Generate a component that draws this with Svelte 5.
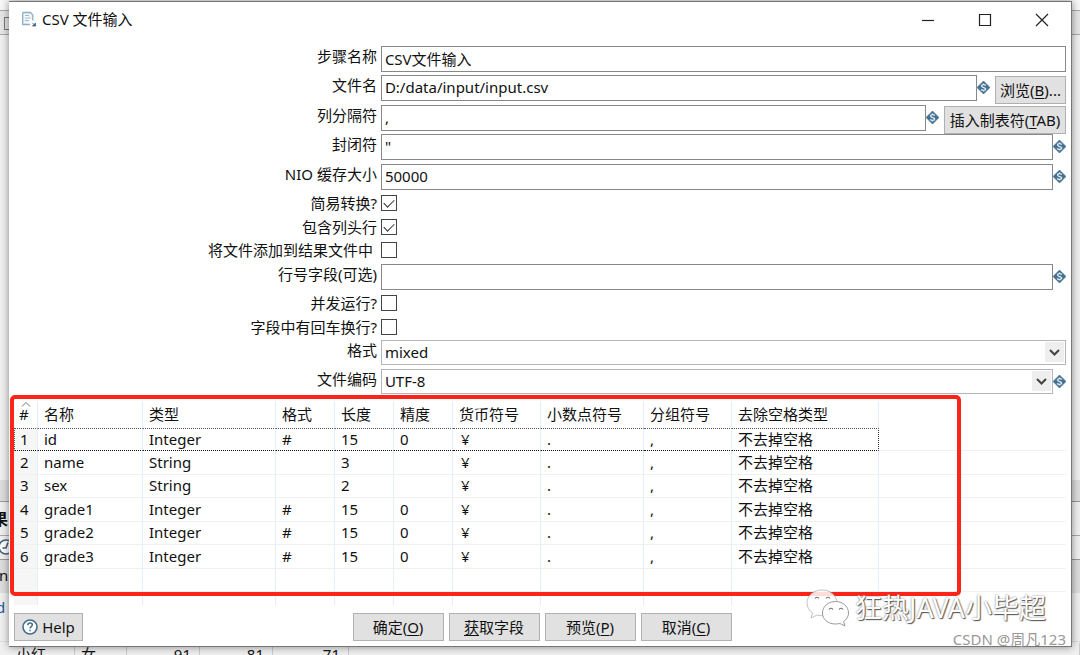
<script lang="ts">
	interface Field {
		name: string;
		type: string;
		format: string;
		length: string;
		precision: string;
	}

	let stepName = $state('CSV文件输入');
	let filename = $state('D:/data/input/input.csv');
	let delimiter = $state(',');
	let enclosure = $state('"');
	let bufferSize = $state('50000');
	let lazy = $state(true);
	let header = $state(true);
	let addResult = $state(false);
	let rowNumField = $state('');
	let parallel = $state(false);
	let newlines = $state(false);
	let format = $state('mixed');
	let encoding = $state('UTF-8');

	const columns = ['名称', '类型', '格式', '长度', '精度', '货币符号', '小数点符号', '分组符号', '去除空格类型'];

	const fields: Field[] = [
		{ name: 'id', type: 'Integer', format: '#', length: '15', precision: '0' },
		{ name: 'name', type: 'String', format: '', length: '3', precision: '' },
		{ name: 'sex', type: 'String', format: '', length: '2', precision: '' },
		{ name: 'grade1', type: 'Integer', format: '#', length: '15', precision: '0' },
		{ name: 'grade2', type: 'Integer', format: '#', length: '15', precision: '0' },
		{ name: 'grade3', type: 'Integer', format: '#', length: '15', precision: '0' }
	];
</script>

{#snippet variable()}
	<svg class="variable" viewBox="0 0 12 12" aria-hidden="true">
		<path d="M6 0 12 6 6 12 0 6Z" fill="#42708f" stroke="#42708f" stroke-width=".6" stroke-linejoin="round" />
		<path d="M8 4.300C7.400 3.100 4.200 3 4.200 4.700S8 5.800 8 7.400 4.500 8.900 3.900 7.700M6 2.200v1.200M6 8.600v1.200" fill="none" stroke="#e6eef4" stroke-width="1.200" />
	</svg>
{/snippet}

<div class="desktop">
	<div class="backdrop" aria-hidden="true">
		<div class="bar tabs"></div>
		<div class="bar tools"><i></i></div>
		<div class="bar canvas"></div>
		<div class="bar sash"></div>
		<div class="bar results">果</div>
		<div class="bar clock">
			<svg viewBox="0 0 16 16"><circle cx="8" cy="8" r="7" fill="#fff" stroke="#42617a" stroke-width="1.6" /><path d="M10 3.5 8 9H4.5" fill="none" stroke="#42617a" stroke-width="1.6" /></svg>
		</div>
		<div class="bar head">ns</div>
		<div class="bar body">d</div>
		<div class="bar record">
			<span>小红</span><span>女</span><span class="num">91</span><span class="num">81</span><span class="num">71</span><span></span>
		</div>
	</div>

	<main class="dialog">
		<header>
			<svg class="logo" viewBox="0 0 16 16" aria-hidden="true">
				<path d="M1.7 1.5h7.8l2.3 2.4v5.6M9 13.5H1.7v-12" fill="#eef5fa" stroke="#8fadc2" stroke-width="1.3" />
				<path d="M4 4.5h4M4 7h5.5M4 9.5h4" stroke="#9bb9cd" stroke-width="1.2" />
				<path d="m11.500 12 1.500 1.500m1.500-1.500v3h-3Z" fill="#38637f" stroke="#38637f" stroke-width=".8" />
			</svg>
			<h1>CSV 文件输入</h1>
			<button class="win" aria-label="Minimize"><svg viewBox="0 0 14 14"><path d="M1 7.5h12" /></svg></button>
			<button class="win" aria-label="Maximize"><svg viewBox="0 0 14 14"><path d="M1.5 1.5h11v11h-11z" /></svg></button>
			<button class="win" aria-label="Close"><svg viewBox="0 0 14 14"><path d="m1 1 12 12M13 1 1 13" /></svg></button>
		</header>

		<form onsubmit={(e) => e.preventDefault()}>
			<label for="step">步骤名称</label>
			<div class="control"><input id="step" type="text" bind:value={stepName} /></div>

			<label for="file">文件名</label>
			<div class="control">
				<input id="file" type="text" bind:value={filename} />
				{@render variable()}
				<button type="button" class="btn side browse">浏览(<u>B</u>)...</button>
			</div>

			<label for="delimiter">列分隔符</label>
			<div class="control">
				<input id="delimiter" type="text" bind:value={delimiter} />
				{@render variable()}
				<button type="button" class="btn side tab">插入制表符(<u>T</u>AB)</button>
			</div>

			<label for="enclosure">封闭符</label>
			<div class="control"><input id="enclosure" type="text" bind:value={enclosure} />{@render variable()}</div>

			<label for="buffer">NIO 缓存大小</label>
			<div class="control"><input id="buffer" type="text" bind:value={bufferSize} />{@render variable()}</div>

			<label class="short" for="lazy">简易转换?</label>
			<input id="lazy" type="checkbox" bind:checked={lazy} />

			<label class="short" for="header">包含列头行</label>
			<input id="header" type="checkbox" bind:checked={header} />

			<label class="short" for="add">将文件添加到结果文件中&nbsp;</label>
			<input id="add" type="checkbox" bind:checked={addResult} />

			<label for="rownum">行号字段(可选)</label>
			<div class="control"><input id="rownum" type="text" bind:value={rowNumField} />{@render variable()}</div>

			<label class="short" for="parallel">并发运行?</label>
			<input id="parallel" type="checkbox" bind:checked={parallel} />

			<label class="short" for="newlines">字段中有回车换行?</label>
			<input id="newlines" type="checkbox" bind:checked={newlines} />

			<label for="format">格式</label>
			<div class="control">
				<div class="combo">
					<select id="format" bind:value={format}><option>mixed</option><option>DOS</option><option>Unix</option></select>
					<svg viewBox="0 0 19 20" aria-hidden="true"><path d="m5 8 4.5 4.5L14 8" /></svg>
				</div>
			</div>

			<label for="encoding">文件编码</label>
			<div class="control">
				<div class="combo">
					<select id="encoding" bind:value={encoding}><option>UTF-8</option><option>GBK</option></select>
					<svg viewBox="0 0 19 20" aria-hidden="true"><path d="m5 8 4.5 4.5L14 8" /></svg>
				</div>
				{@render variable()}
			</div>
		</form>

		<section class="fields">
			<table>
				<colgroup>
					<col class="w-index" /><col class="w-name" /><col class="w-type" /><col class="w-small" /><col class="w-small" /><col class="w-small" />
					<col class="w-mid" /><col class="w-decimal" /><col class="w-mid" /><col class="w-trim" /><col />
				</colgroup>
				<thead>
					<tr>
						<th class="index">
							<svg viewBox="0 0 10 5" aria-hidden="true"><path d="m1 4.5 4-4 4 4" fill="none" stroke="#777" /></svg>#
						</th>
						{#each columns as column}
							<th>{column}</th>
						{/each}
						<th></th>
					</tr>
				</thead>
				<tbody>
					{#each fields as field, i (field.name)}
						<tr class:focused={i === 0}>
							<td class="index">{i + 1}</td>
							<td>{field.name}</td>
							<td>{field.type}</td>
							<td>{field.format}</td>
							<td>{field.length}</td>
							<td>{field.precision}</td>
							<td class="currency">¥</td>
							<td>.</td>
							<td>,</td>
							<td>不去掉空格</td>
							<td></td>
						</tr>
					{/each}
					{#each ['blank', 'rest'] as kind}
						<tr class={kind}>
							<td class="index"></td>
							{#each columns as _}<td></td>{/each}
							<td></td>
						</tr>
					{/each}
				</tbody>
			</table>
			<div class="highlight"></div>
		</section>

		<footer>
			<button class="btn help">
				<svg viewBox="0 0 16 16" aria-hidden="true">
					<circle cx="8" cy="8" r="7" fill="#fff" stroke="#426c8b" stroke-width="1.6" />
					<path d="M5.8 6.3c0-3 4.5-2.8 4.5-.2C10.300 7.700 8 7.700 8 9.600M8 10.800v1.500" fill="none" stroke="#426c8b" stroke-width="1.500" />
				</svg>Help
			</button>
			<div class="actions">
				<button class="btn">确定(<u>O</u>)</button>
				<button class="btn"><u>获</u>取字段</button>
				<button class="btn">预览(<u>P</u>)</button>
				<button class="btn">取消(<u>C</u>)</button>
			</div>
		</footer>
	</main>

	<div class="watermark">
		<svg viewBox="0 0 44 38" aria-hidden="true">
			<g stroke="#999" stroke-width="1">
				<path d="M16 1C7.500 1 1 6.700 1 14c0 4.200 2.200 7.700 5.600 10L5 29l6-3c1.600.5 3.300.7 5 .7 8.500 0 15-5.500 15-12.700S24.500 1 16 1Z" fill="#fff" fill-opacity=".85" stroke-opacity=".6" />
				<path d="M29.500 12.500C22 12.500 16.500 17.500 16.500 24S22 35 29.500 35c1.500 0 3-.2 4.300-.6l5.200 2.600-1.400-4.400c3-2 4.900-5.100 4.900-8.600 0-6.500-5.500-11.500-13-11.500Z" fill="#fff" />
			</g>
			<path d="M9 9.500q2-2.500 4 0M20 9.500q2-2.500 4 0M23 20.500q2-2.500 4 0M33 20.500q2-2.500 4 0" fill="none" stroke="#777" stroke-width="1.200" />
		</svg>
		<span>狂热JAVA小毕超</span>
	</div>
	<div class="credit">CSDN @周凡123</div>
</div>

<style>
	:global(body) {
		background: #f0f0f0;
	}

	.desktop {
		position: relative;
		overflow: hidden;
		padding: 1px 8px 9px 9px;
		font-family: 'Noto Sans', 'Noto Sans CJK SC', sans-serif;
		font-size: 15px;
		line-height: 22px;
		color: #111;
	}

	.desktop *, .desktop {
		box-sizing: border-box;
	}

	.backdrop {
		position: absolute;
		inset: 0;
		display: flex;
		flex-direction: column;
		background: #f0f0f0;
	}
	.bar {
		flex: none;
		overflow: hidden;
		white-space: nowrap;
	}
	.tabs { height: 11px; background: #f8f8f8; border-bottom: 1px solid #aaa; }
	.tools { height: 24px; padding-top: 6px; background: #e6e6e6; border-bottom: 1px solid #aaa; }
	.tools i { display: block; width: 12px; height: 13px; margin-left: 4px; border: 1px solid #777; }
	.canvas { height: 445px; }
	.sash { height: 22px; background: #ddd; border-bottom: 1px solid #999; }
	.results { height: 34px; line-height: 34px; font-size: 16px; font-weight: 700; text-indent: -8px; border-bottom: 1px solid #aaa; }
	.clock { height: 24px; padding-top: 3px; border-bottom: 1px solid #999; }
	.clock svg { display: block; width: 16px; margin-left: -2px; }
	.head { height: 33px; line-height: 30px; text-indent: -1px; background: #ddd; }
	.body { height: 49px; line-height: 28px; color: #145a9c; text-indent: -4px; border-bottom: 1px solid #ddd; }
	.record { display: grid; grid-template-columns: 75px 52px 73px 73px 76px 1fr; flex: 1; padding-top: 1px; }
	.record span { padding-left: 6px; border-right: 1px solid #ccc; }
	.record span:first-child { padding-left: 16px; }
	.record .num { padding: 0 8px 0 0; text-align: right; }

	.dialog {
		position: relative;
		background: #fff;
		border: 1px solid #777;
		border-width: 1px 1px 1px 0;
		box-shadow: 0 0 8px rgba(0, 0, 0, 0.45);
	}

	header {
		display: flex;
		align-items: center;
		height: 34px;
		padding: 0 1px 0 12px;
	}
	.logo { width: 16px; height: 16px; }
	h1 {
		flex: 1;
		margin: 0 0 0 5px;
		font-size: 15px;
		font-weight: 400;
	}
	.win {
		width: 57px;
		height: 34px;
		padding: 0;
		border: 0;
		background: none;
	}
	.win svg { width: 14px; height: 14px; vertical-align: middle; }
	.win path { fill: none; stroke: #222; stroke-width: 1.2; }

	form {
		display: grid;
		grid-template-columns: 35% 1fr;
		grid-template-rows: 29px 30px 29px 30px 31px 24px 23px 22px 31px 24px 21px 29px 26px;
		padding: 10px 5px 0 3px;
		margin: 0;
	}
	label {
		padding-right: 4px;
		text-align: right;
		line-height: 20px;
	}
	label.short { line-height: 16px; }

	.control {
		display: flex;
		align-items: flex-start;
	}
	input[type='text'] {
		flex: 1;
		min-width: 0;
		height: 26px;
		padding: 0 3px 2px;
		border: 1px solid #888;
		border-radius: 0;
		background: #fff;
		font: inherit;
		color: inherit;
	}
	.variable {
		flex: none;
		width: 13px;
		height: 13px;
		margin-top: 6px;
	}

	input[type='checkbox'] {
		appearance: none;
		width: 16px;
		height: 16px;
		margin: 0;
		border: 1px solid #444;
		background: #fff;
	}
	input[type='checkbox']:checked::after {
		content: '';
		display: block;
		width: 9px;
		height: 5px;
		margin: 3px 2px;
		border: solid #333;
		border-width: 0 0 1px 1px;
		transform: rotate(-45deg);
	}

	.combo {
		position: relative;
		flex: 1;
	}
	.combo select {
		display: block;
		appearance: none;
		width: 100%;
		height: 25px;
		padding: 0 3px 2px;
		border: 1px solid #b4b4ba;
		border-radius: 0;
		background: #fff;
		font: inherit;
		color: inherit;
	}
	.combo svg {
		position: absolute;
		top: 2px;
		right: 2px;
		width: 19px;
		height: 20px;
		background: #eee;
		pointer-events: none;
	}
	.combo path { fill: none; stroke: #444; stroke-width: 2; }

	.btn {
		height: 28px;
		padding: 0;
		border: 1px solid #b0b0b0;
		background: #e1e1e1;
		font: inherit;
		color: inherit;
		white-space: nowrap;
	}
	.side { flex: none; margin: 1px 0 0 5px; }
	.browse { width: 71px; }
	.tab { width: 122px; }
	u { text-underline-offset: 2px; }

	.fields {
		position: relative;
		margin: 6px 5px 0;
	}
	table {
		width: 100%;
		table-layout: fixed;
		border-collapse: separate;
		border-spacing: 0;
	}
	.w-index { width: 24px; }
	.w-name { width: 105px; }
	.w-type { width: 133px; }
	.w-small { width: 59px; }
	.w-mid { width: 88px; }
	.w-decimal { width: 103px; }
	.w-trim { width: 147px; }

	th, td {
		padding: 0 0 2px 6px;
		text-align: left;
		font-weight: 400;
		line-height: 20px;
		white-space: nowrap;
		border-right: 1px solid #e6edf6;
	}
	th { height: 27px; }
	td { height: 23px; border-bottom: 1px solid #f0f0f0; }
	td { line-height: 18px; }
	tr:nth-child(even) td { height: 24px; }
	th:last-child, td:last-child { border-right: 0; }
	td.index { background: #f6f6f6; }
	th.index { position: relative; padding-left: 5px; }
	th.index svg { position: absolute; top: 1px; left: 7px; width: 10px; height: 5px; }
	td.currency { padding-left: 8px; }

	.focused td:not(:last-child) {
		border-top: 1px dotted #555;
		border-bottom: 1px dotted #111;
	}
	.focused td:first-child { border-left: 1px dotted #555; padding-left: 5px; }
	.focused td:nth-last-child(2) { border-right: 1px dotted #333; }
	.rest td { border-bottom: 0; }
	.desktop .rest td { height: 13px; }

	.highlight {
		position: absolute;
		top: -6px;
		left: -4px;
		right: 105px;
		bottom: 9px;
		border: 4px solid #fb2418;
		border-radius: 5px;
		pointer-events: none;
	}

	footer {
		display: flex;
		padding: 8px 5px 5px;
	}
	.help {
		display: flex;
		align-items: center;
		justify-content: center;
		gap: 4px;
		width: 69px;
	}
	.help svg { width: 16px; height: 16px; }
	.actions {
		flex: 1;
		display: flex;
		justify-content: center;
		gap: 5px;
		padding-right: 65px;
	}
	.actions .btn { width: 91px; }

	.watermark {
		position: absolute;
		right: 34px;
		bottom: 29px;
		display: flex;
		align-items: center;
		gap: 5px;
		font-size: 27px;
		line-height: 38px;
		color: #fff;
		text-shadow: 1px 1px 1px #555, 0 0 2px #777;
	}
	.watermark svg { width: 44px; height: 38px; }
	.credit {
		position: absolute;
		right: 14px;
		bottom: 6px;
		color: #999;
	}
</style>
